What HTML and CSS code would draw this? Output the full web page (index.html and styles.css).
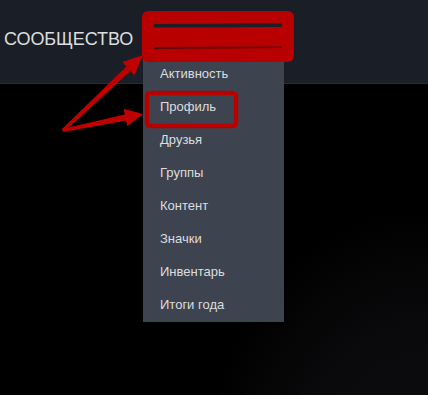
FILE: index.html
```html
<!DOCTYPE html>
<html lang="ru">
<head>
<meta charset="utf-8">
<link rel="stylesheet" href="styles.css">
</head>
<body>
<div class="page">
  <header class="header">
    <span class="title">СООБЩЕСТВО</span>
  </header>
  <main class="main"></main>

  <nav class="dropdown">
    <a class="item">Активность</a>
    <a class="item">Профиль</a>
    <a class="item">Друзья</a>
    <a class="item">Группы</a>
    <a class="item">Контент</a>
    <a class="item">Значки</a>
    <a class="item">Инвентарь</a>
    <a class="item">Итоги года</a>
  </nav>

  <svg class="marks" width="428" height="395" viewBox="0 0 428 395">
    <rect x="142" y="11" width="152" height="51" rx="6" fill="#b80000"/>
    <path d="M154 24 L282 23.5 L282 27 L154 27.5 Z" fill="#1c1f26"/>
    <path d="M155 47 L282 46.5 L282 48 L155 49 Z" fill="#5a0a0a"/>
    <circle cx="156" cy="48" r="1.5" fill="#1c1f26"/>
    <rect x="147" y="93" width="89" height="33" rx="3" fill="none" stroke="#b80000" stroke-width="4.5"/>
    <path d="M61.5 129.5 L126.4 66.5 L122.3 62.1 L143 55 L134.5 75.3 L130.4 70.9 L64.5 131.5 Z" fill="#c00000"/>
    <path d="M62 129 L124.8 114.6 L123.6 108.7 L143 114 L127.2 126.3 L126 120.4 L63.5 132 Z" fill="#c00000"/>
  </svg>
</div>
</body>
</html>
```
FILE: styles.css
```css
* { box-sizing: border-box; }
html, body { margin: 0; padding: 0; }
body {
  width: 428px;
  height: 395px;
  overflow: hidden;
  background: #000;
  font-family: "Liberation Sans", Arial, sans-serif;
}
.page {
  position: relative;
  width: 428px;
  height: 395px;
  display: flex;
  flex-direction: column;
}
.header {
  height: 84px;
  flex: none;
  background: #1a1e26;
  border-bottom: 1px solid #2a2e36;
  display: flex;
  align-items: center;
  padding: 0 0 4px 4px;
}
.title {
  color: #dcdedf;
  font-size: 18px;
  letter-spacing: -0.1px;
}
.main {
  flex: 1;
  background:
    radial-gradient(ellipse 220px 280px at 420px 400px, #0c0c0f 0%, #0a0a0c 55%, rgba(0,0,0,0) 100%),
    #000;
}
.dropdown {
  position: absolute;
  left: 143px;
  top: 57px;
  width: 141px;
  background: #3d4450;
  display: flex;
  flex-direction: column;
  padding-bottom: 1px;
}
.item {
  height: 33px;
  display: flex;
  align-items: center;
  padding-left: 17px;
  color: #dcdedf;
  font-size: 13px;
}
.marks {
  position: absolute;
  left: 0;
  top: 0;
  pointer-events: none;
}
```
